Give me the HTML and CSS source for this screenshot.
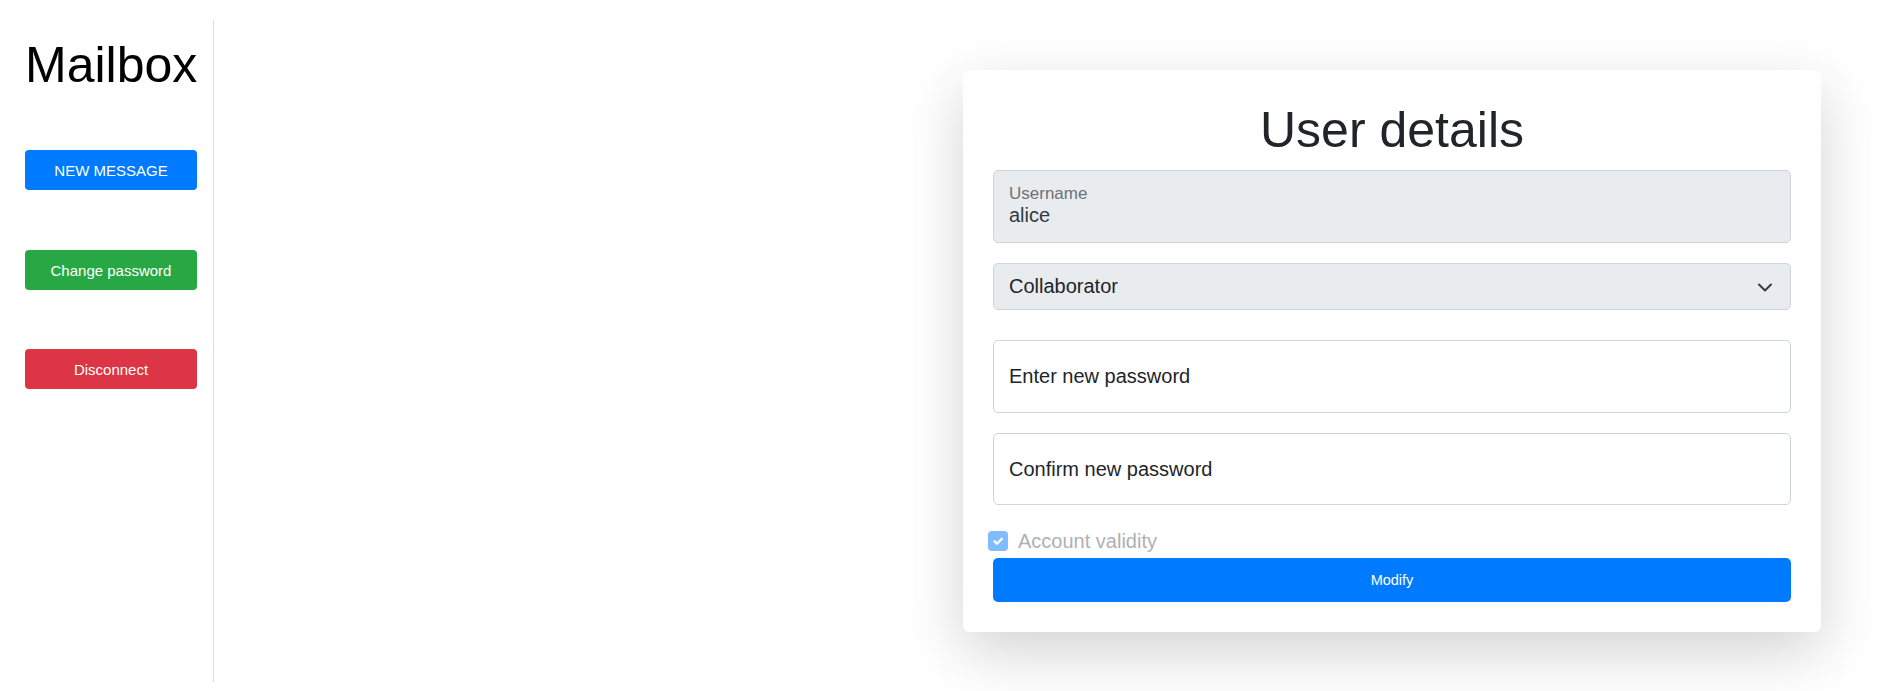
FILE: index.html
```html
<!DOCTYPE html>
<html lang="en">
<head>
<meta charset="utf-8">
<title>Mailbox</title>
<link rel="stylesheet" href="styles.css">
</head>
<body>
<div class="layout">
  <aside class="sidebar">
    <h1 class="brand">Mailbox</h1>
    <button class="side-btn btn-blue">NEW MESSAGE</button>
    <button class="side-btn btn-green">Change password</button>
    <button class="side-btn btn-red">Disconnect</button>
  </aside>
  <main class="main">
    <section class="card">
      <h2 class="card-title">User details</h2>
      <div class="field field-readonly">
        <span class="field-label">Username</span>
        <span class="field-value">alice</span>
      </div>
      <div class="select">
        <span>Collaborator</span>
        <svg class="chevron" width="16" height="16" viewBox="0 0 16 16"><path d="M2 5.5l6 6 6-6" fill="none" stroke="#343a40" stroke-width="2" stroke-linecap="round" stroke-linejoin="round"/></svg>
      </div>
      <div class="field field-input gap-lg">Enter new password</div>
      <div class="field field-input">Confirm new password</div>
      <label class="check-row">
        <span class="checkbox"><svg width="14" height="14" viewBox="0 0 20 20"><path d="M5 10.5l3.4 3.4L15.5 7" fill="none" stroke="#fff" stroke-width="3.4" stroke-linecap="round" stroke-linejoin="round"/></svg></span>
        <span class="check-label">Account validity</span>
      </label>
      <button class="submit">Modify</button>
    </section>
  </main>
</div>
</body>
</html>
```

FILE: styles.css
```css
* { box-sizing: border-box; }
html, body { margin: 0; height: 100%; }
body {
  font-family: "Liberation Sans", Arial, sans-serif;
  color: #212529;
  background: #fff;
}
.layout {
  display: flex;
  height: 691px;
  padding: 20px 0 9px;
}
.sidebar {
  width: 214px;
  flex: none;
  border-right: 1px solid #dcdcdc;
  padding: 0 16px 0 25px;
  display: flex;
  flex-direction: column;
}
.brand {
  margin: 15px 0 55px;
  font-size: 50px;
  font-weight: 400;
  line-height: 60px;
  color: #000;
  text-align: center;
}
.side-btn {
  width: 172px;
  height: 40px;
  border: none;
  border-radius: 4px;
  color: #fff;
  font-family: "Liberation Sans", Arial, sans-serif;
  font-size: 15px;
  margin: 0 0 60px;
  padding: 0;
}
.btn-green { background: #28a745; margin-bottom: 59px; }
.btn-blue { background: #007bff; }
.btn-red { background: #dc3545; }
.main {
  flex: 1;
  display: flex;
  justify-content: flex-end;
  align-items: flex-start;
  padding: 50px 63px 0 0;
}
.card {
  width: 858px;
  background: #fff;
  border-radius: 6px;
  box-shadow: 0 20px 60px rgba(0,0,0,0.175);
  padding: 30px;
  display: flex;
  flex-direction: column;
}
.card-title {
  margin: 0 0 10px;
  font-size: 50px;
  font-weight: 400;
  line-height: 60px;
  text-align: center;
  color: #212529;
}
.field {
  height: 73px;
  border: 1px solid #ced4da;
  border-radius: 5px;
  padding: 0 15px;
  font-size: 20px;
}
.field-readonly {
  background: #e9ecef;
  display: flex;
  flex-direction: column;
  padding-top: 13px;
  margin-bottom: 20px;
}
.field-label {
  font-size: 17px;
  line-height: 19px;
  color: #6d7177;
}
.field-value {
  font-size: 20px;
  line-height: 24px;
  color: #343a40;
}
.select {
  height: 47px;
  background: #e9ecef;
  border: 1px solid #ced4da;
  border-radius: 5px;
  padding: 0 17px 0 15px;
  display: flex;
  align-items: center;
  justify-content: space-between;
  font-size: 20px;
}
.chevron { display: block; }
.field-input {
  background: #fff;
  display: flex;
  align-items: center;
  color: #212529;
  margin-bottom: 20px;
}
.field-input + .field-input { height: 72px; margin-bottom: 21px; }
.gap-lg { margin-top: 30px; }
.check-row {
  height: 30px;
  display: flex;
  align-items: center;
  margin: 0 0 2px -5px;
}
.checkbox {
  width: 20px;
  height: 20px;
  border-radius: 4px;
  background: #80bdff;
  display: flex;
  align-items: center;
  justify-content: center;
  margin-right: 10px;
}
.check-label {
  font-size: 20px;
  color: #adb1b5;
}
.submit {
  height: 44px;
  width: 100%;
  border: none;
  border-radius: 5px;
  background: #007bff;
  color: #fff;
  font-family: "Liberation Sans", Arial, sans-serif;
  font-size: 14.5px;
}
```
